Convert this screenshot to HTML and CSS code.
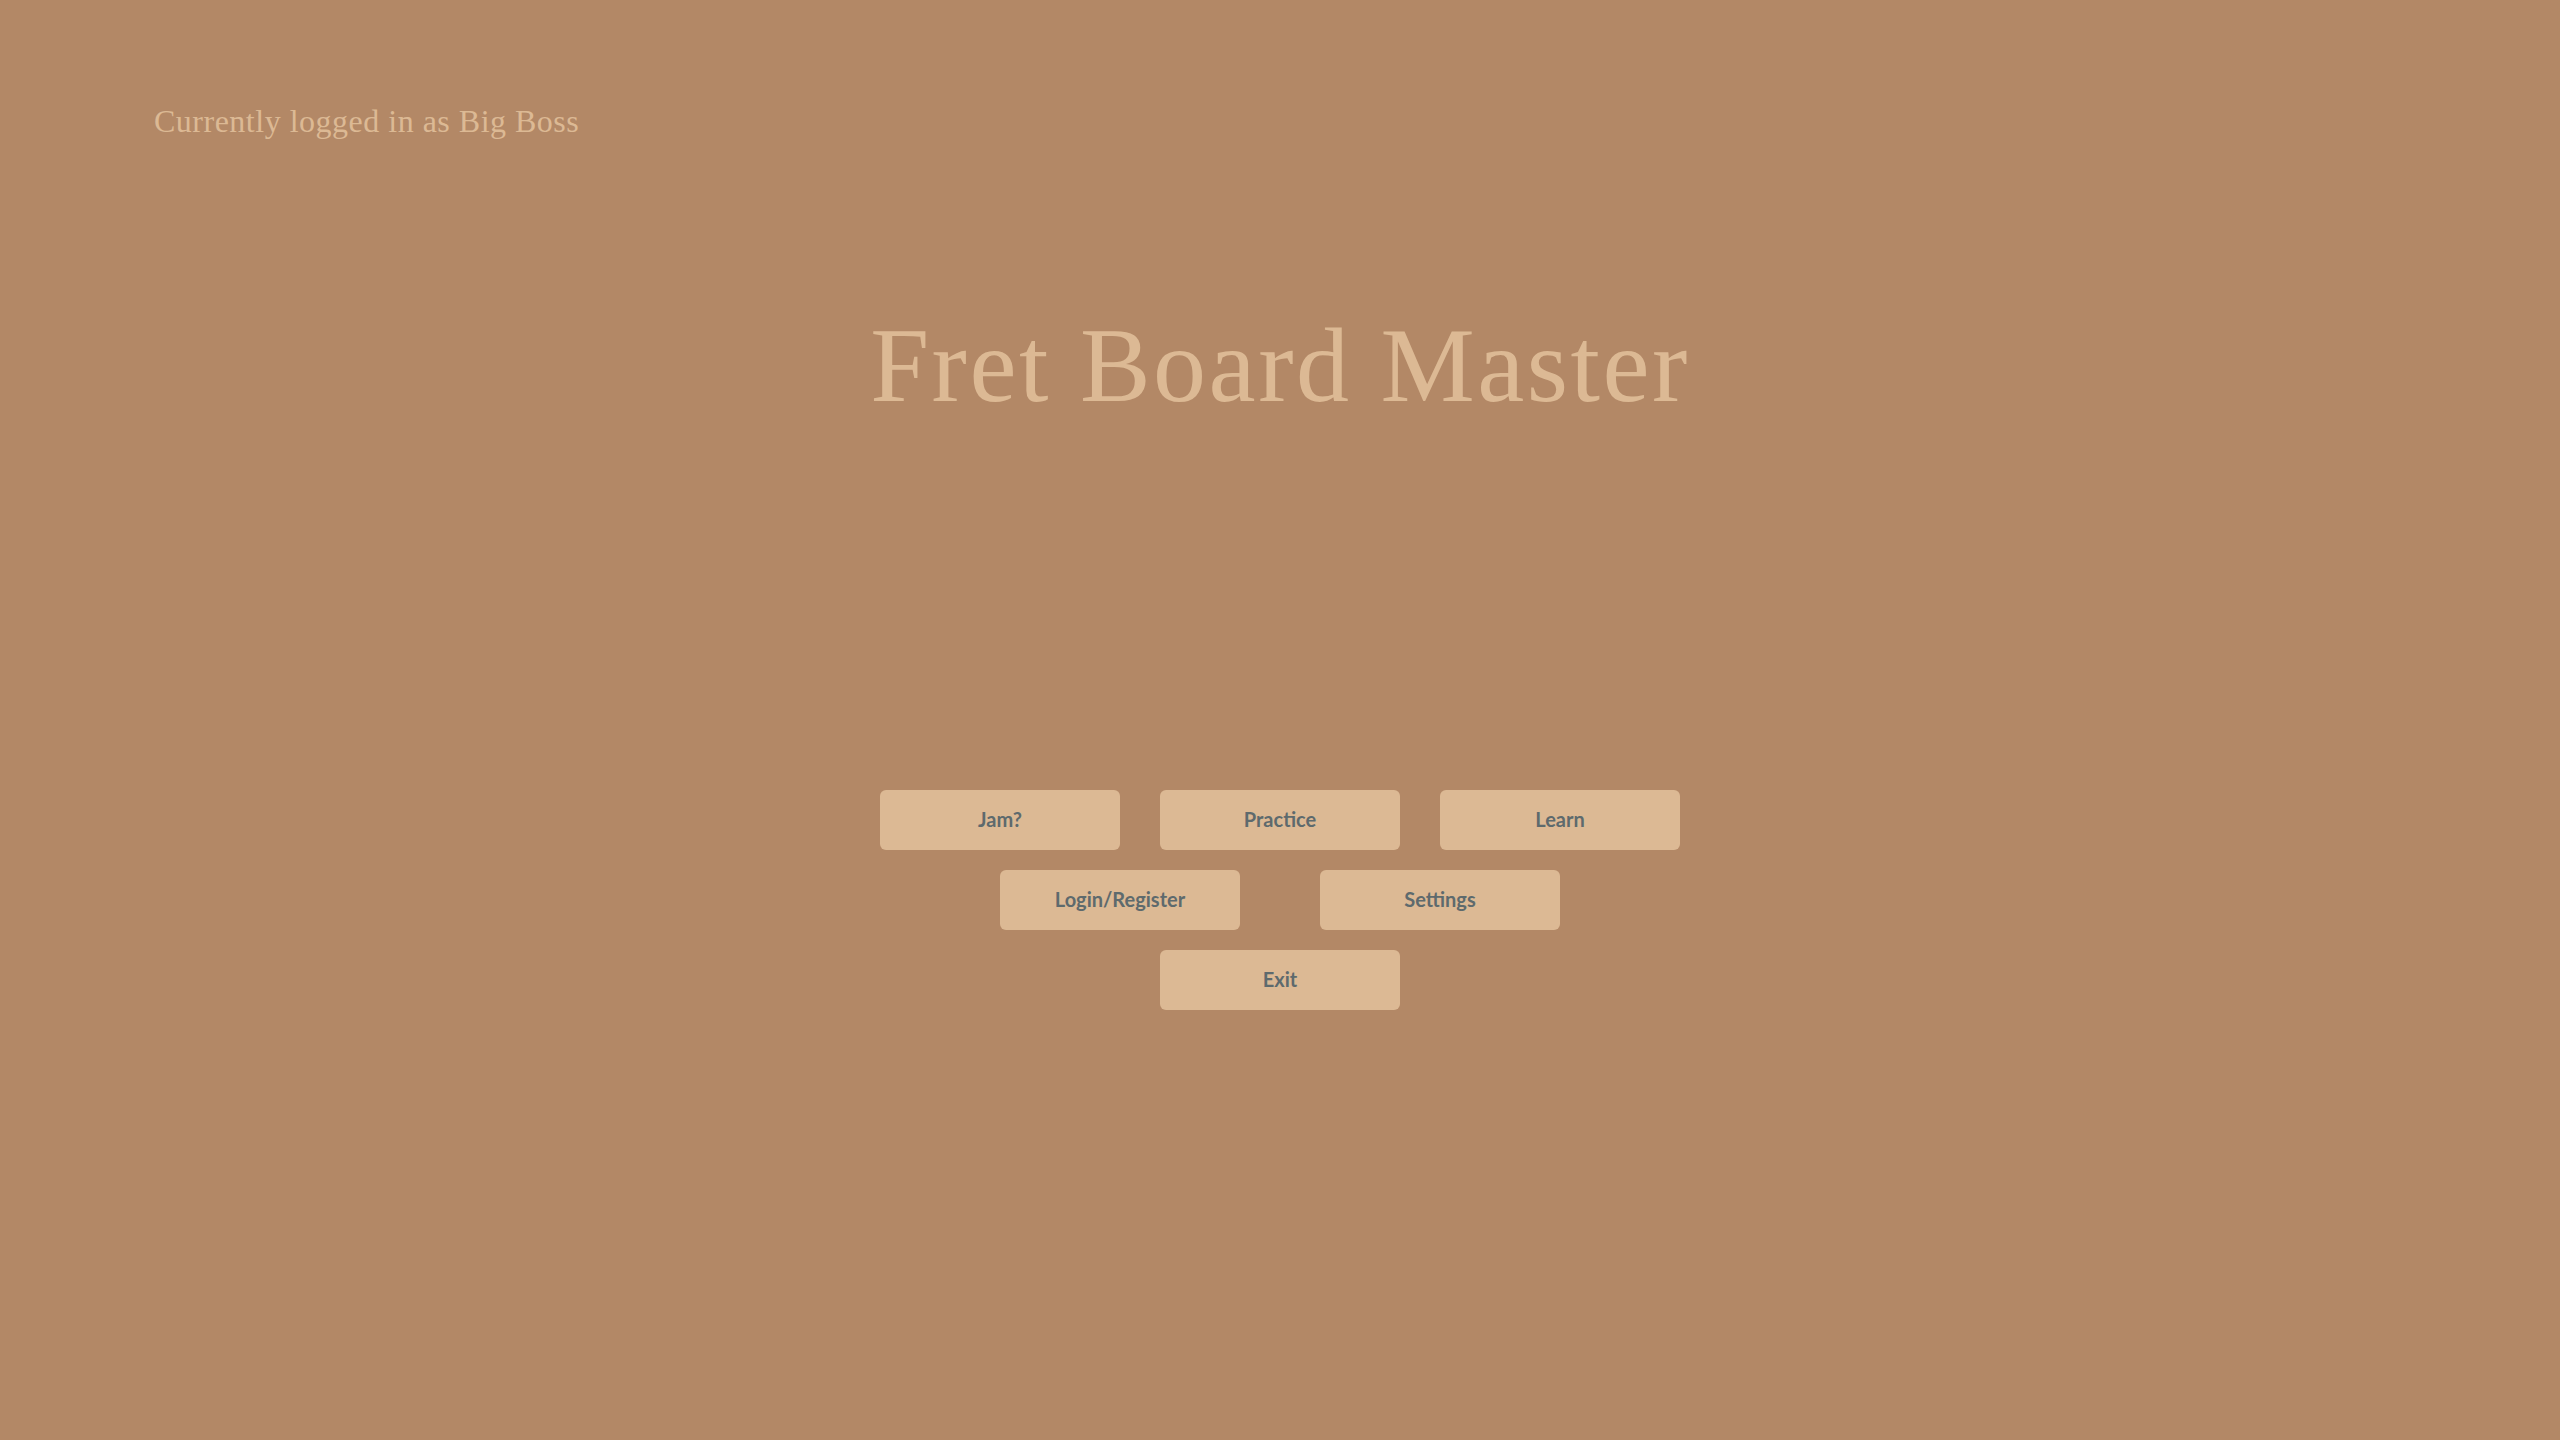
FILE: index.html
```html
<!DOCTYPE html>
<html lang="en">
<head>
<meta charset="utf-8">
<title>Fret Board Master</title>
<link rel="stylesheet" href="styles.css">
</head>
<body>
<div class="page">
  <div class="status">Currently logged in as Big Boss</div>
  <h1 class="title">Fret Board Master</h1>
  <div class="menu">
    <div class="menu-row">
      <button class="btn">Jam?</button>
      <button class="btn">Practice</button>
      <button class="btn">Learn</button>
    </div>
    <div class="menu-row wide">
      <button class="btn">Login/Register</button>
      <button class="btn">Settings</button>
    </div>
    <div class="menu-row">
      <button class="btn">Exit</button>
    </div>
  </div>
</div>
</body>
</html>
```
FILE: styles.css
```css
html, body {
  margin: 0;
  padding: 0;
  background: #b38866;
}
.page {
  width: 2560px;
  height: 1440px;
  display: flex;
  flex-direction: column;
  box-sizing: border-box;
}
.status {
  margin: 101px 0 0 154px;
  font-family: "Liberation Serif", serif;
  font-size: 32px;
  line-height: 40px;
  letter-spacing: 0.5px;
  color: #dcb994;
}
.title {
  margin: 165px 0 0 0;
  text-align: center;
  font-family: "Liberation Serif", serif;
  font-weight: 400;
  font-size: 106px;
  line-height: 120px;
  letter-spacing: 2.5px;
  color: #dcb994;
}
.menu {
  margin-top: 364px;
  display: flex;
  flex-direction: column;
  align-items: center;
  gap: 20px;
}
.menu-row {
  display: flex;
  justify-content: center;
  gap: 40px;
}
.menu-row.wide {
  gap: 80px;
}
.btn {
  width: 240px;
  height: 60px;
  border: none;
  border-radius: 6px;
  background: #dcb994;
  color: #5e6a6d;
  font-family: "Lato", sans-serif;
  font-weight: 700;
  font-size: 20px;
  padding: 0 0 3px 0;
  cursor: pointer;
}
```
